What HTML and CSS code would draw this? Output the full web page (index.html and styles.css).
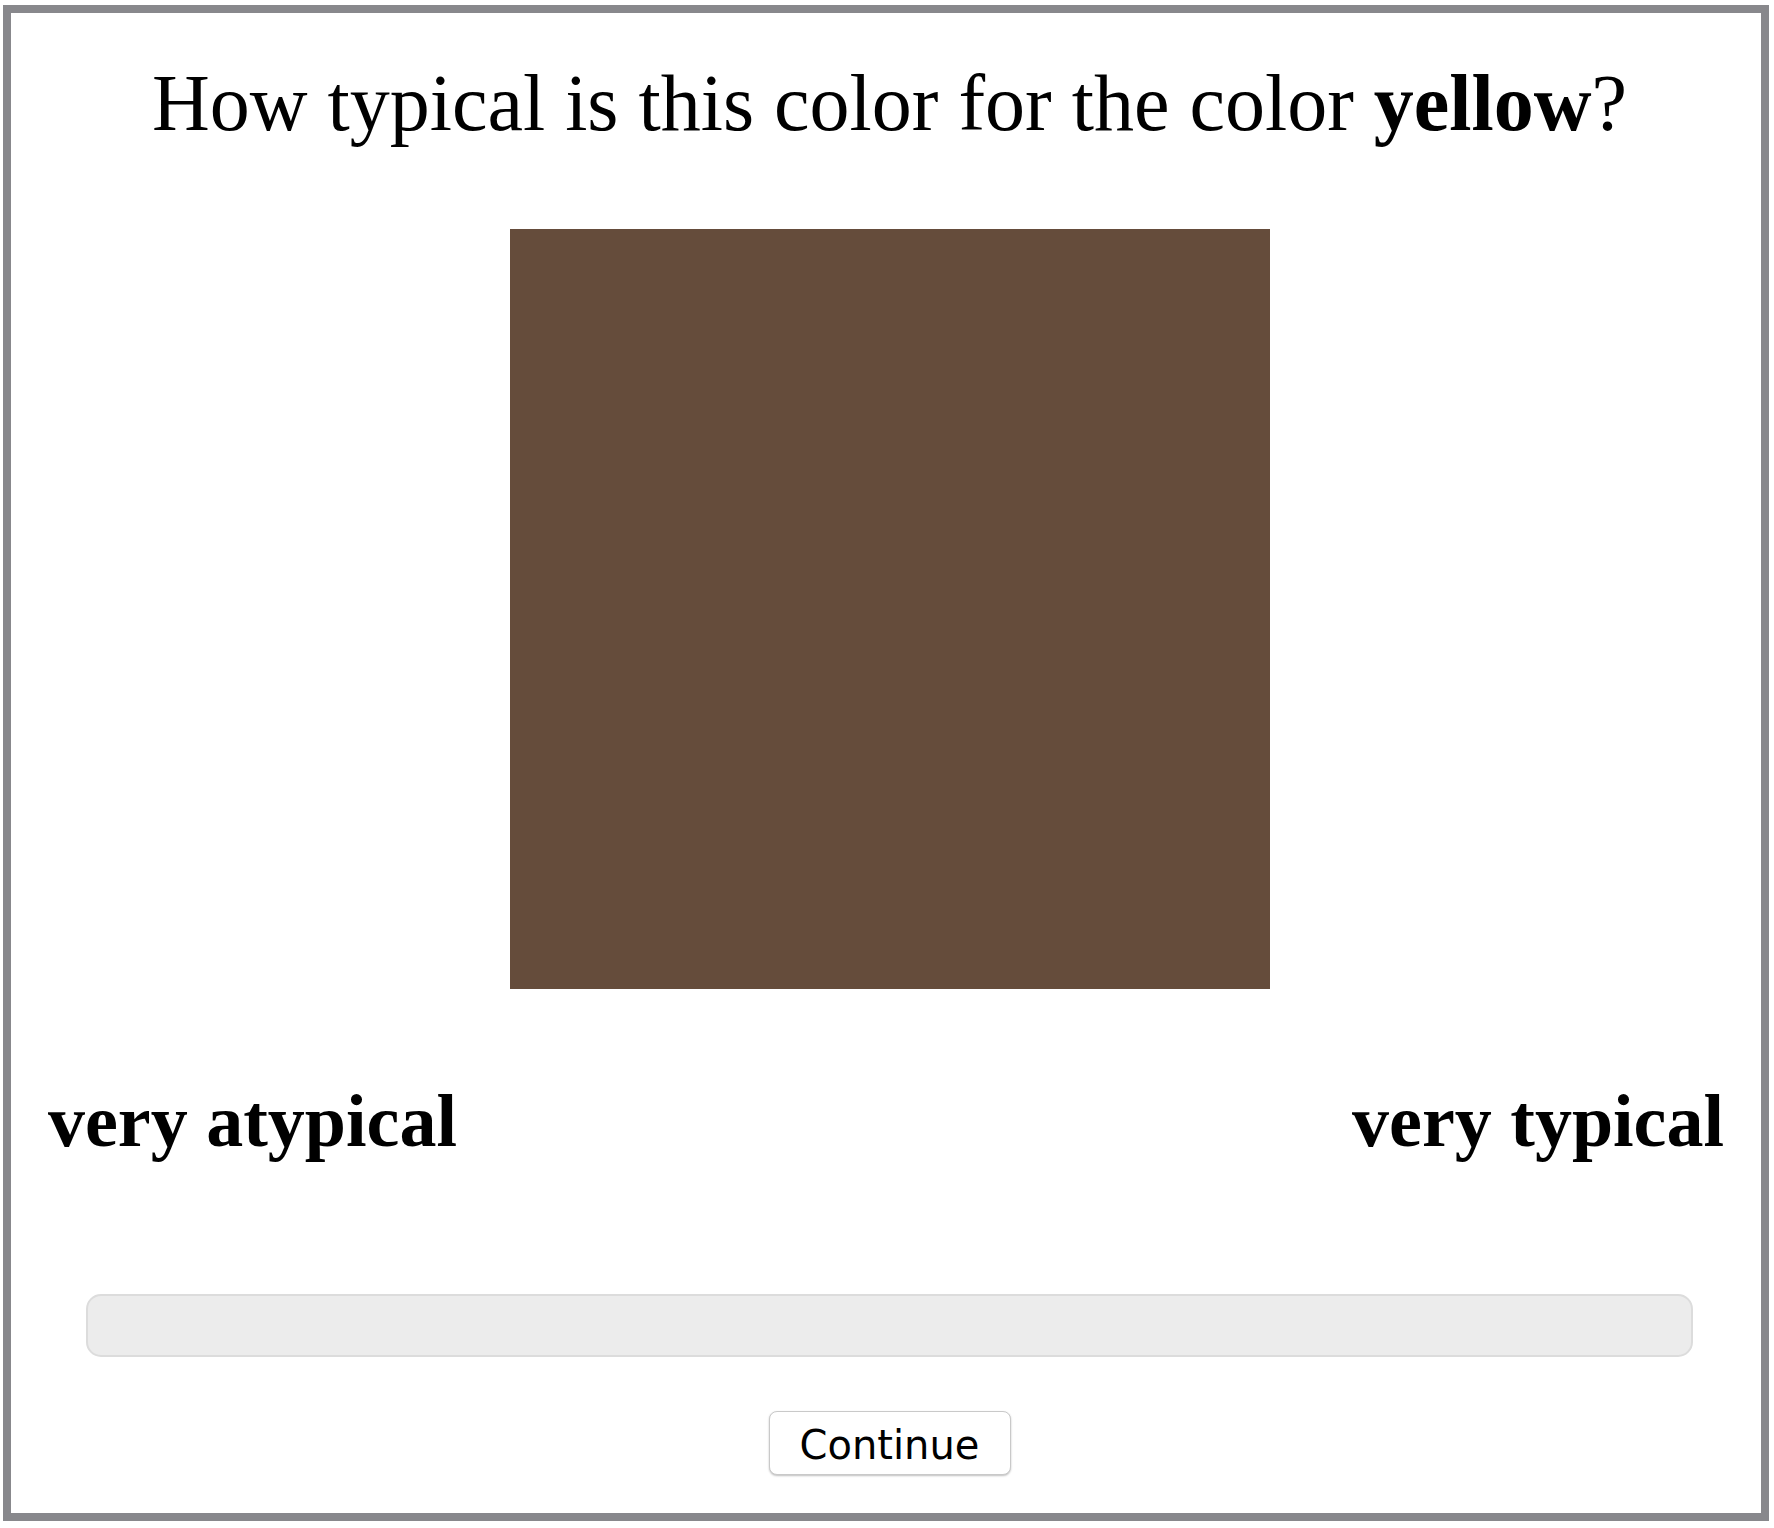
FILE: index.html
```html
<!DOCTYPE html>
<html>
<head>
<meta charset="utf-8">
<link rel="stylesheet" href="styles.css">
</head>
<body>
<div class="frame">
  <div class="centered">
    <h1 class="question">How typical is this color for the color <b>yellow</b>?</h1>
    <div class="swatch"></div>
  </div>
  <div class="labels">
    <span class="label">very atypical</span>
    <span class="label">very typical</span>
  </div>
  <div class="centered">
    <div class="slider"></div>
    <button class="continue">Continue</button>
  </div>
</div>
</body>
</html>
```
FILE: styles.css
```css
html, body {
  margin: 0;
  padding: 0;
  background: #ffffff;
}
.frame {
  margin: 5px 0 0 3px;
  width: 1750px;
  height: 1500px;
  border: 8px solid #88888c;
  display: flex;
  flex-direction: column;
  font-family: "Liberation Serif", "Times New Roman", serif;
  color: #000;
}
.centered {
  display: flex;
  flex-direction: column;
  align-items: center;
  padding-left: 7px;
}
.question {
  margin: 44px 0 0 0;
  font-size: 80px;
  font-weight: normal;
  line-height: 92px;
  white-space: nowrap;
}
.question b {
  font-weight: bold;
}
.swatch {
  margin-top: 80px;
  width: 760px;
  height: 760px;
  background: #654c3b;
}
.labels {
  display: flex;
  justify-content: space-between;
  padding: 0 37px 0 37px;
  margin-top: 89px;
}
.label {
  font-size: 74px;
  font-weight: bold;
  line-height: 86px;
  white-space: nowrap;
}
.slider {
  margin-top: 130px;
  width: 1603px;
  height: 59px;
  background: #ececec;
  border: 2px solid #dcdcdc;
  border-radius: 15px;
}
.continue {
  margin-top: 54px;
  width: 242px;
  height: 64px;
  background: #ffffff;
  border: 1px solid #c9c9c9;
  border-radius: 8px;
  box-shadow: 0 1px 2px rgba(0, 0, 0, 0.25);
  font-family: "DejaVu Sans", Verdana, sans-serif;
  font-size: 40px;
  line-height: 62px;
  color: #000;
  padding: 2px 0 0 0;
}
```
